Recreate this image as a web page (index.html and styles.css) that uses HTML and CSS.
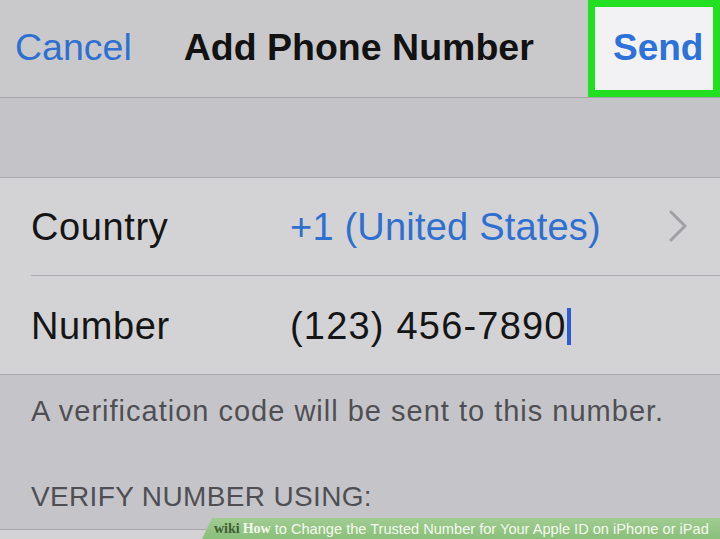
FILE: index.html
```html
<!DOCTYPE html>
<html lang="en">
<head>
<meta charset="utf-8">
<title>Add Phone Number</title>
<link rel="stylesheet" href="styles.css">
</head>
<body>
<div class="screen">
  <header class="nav">
    <span class="nav-cancel">Cancel</span>
    <span class="nav-title">Add Phone Number</span>
    <span class="nav-send">Send</span>
  </header>

  <div class="spacer"></div>

  <section class="group">
    <div class="row row-sep">
      <span class="row-label">Country</span>
      <span class="row-value blue">+1 (United States)</span>
      <svg class="chevron" width="20" height="32" viewBox="0 0 20 32" aria-hidden="true">
        <polyline points="3,2 17,16 3,30" fill="none" stroke="#a0a0a4" stroke-width="3" stroke-linecap="round" stroke-linejoin="round"/>
      </svg>
    </div>
    <div class="row">
      <span class="row-label">Number</span>
      <span class="row-value digits">(123) 456-7890<span class="caret"></span></span>
    </div>
  </section>

  <div class="footer">
    <p class="footer-note">A verification code will be sent to this number.</p>
    <p class="footer-head">VERIFY NUMBER USING:</p>
  </div>

  <div class="group next"></div>

  <div class="banner">
    <span class="banner-wiki">wiki</span><span class="banner-how">How</span><span class="banner-text"> to Change the Trusted Number for Your Apple ID on iPhone or iPad</span>
  </div>
</div>
</body>
</html>
```

FILE: styles.css
```css
* {
  box-sizing: border-box;
}

html, body {
  margin: 0;
  padding: 0;
}

body {
  width: 720px;
  height: 539px;
  overflow: hidden;
  background: #c5c5c9;
  font-family: "Liberation Sans", Arial, sans-serif;
}

.screen {
  position: relative;
  width: 720px;
  height: 539px;
  display: flex;
  flex-direction: column;
}

/* navigation bar */
.nav {
  height: 98px;
  flex: none;
  display: flex;
  align-items: stretch;
  background: #c9c9cc;
  border-bottom: 1px solid #a6a6aa;
}

.nav-cancel {
  display: flex;
  align-items: center;
  padding-left: 15px;
  padding-bottom: 2px;
  font-size: 37.5px;
  color: #2f6fcf;
}

.nav-title {
  display: flex;
  align-items: center;
  margin-left: 52px;
  padding-bottom: 2px;
  font-size: 37.5px;
  font-weight: bold;
  color: #121212;
}

.nav-send {
  margin-left: auto;
  width: 132px;
  height: 97px;
  display: flex;
  align-items: center;
  padding-left: 18px;
  padding-bottom: 2px;
  background: #f2f2f4;
  border: 7px solid #22df22;
  font-size: 37px;
  font-weight: bold;
  color: #2d72d8;
}

.spacer {
  height: 80px;
  flex: none;
  background: #c4c4c8;
  border-bottom: 1px solid #aaaaae;
}

/* table cells */
.group {
  flex: none;
  background: #d3d3d5;
  border-bottom: 1px solid #aaaaae;
}

.row {
  position: relative;
  height: 98px;
  display: grid;
  grid-template-columns: 259px 1fr auto;
  align-items: center;
  padding: 3px 32px 0 31px;
  font-size: 38px;
  color: #151515;
}

.row-sep {
  border-bottom: 1px solid #acacb0;
  margin-left: 31px;
  padding-left: 0;
  padding-top: 1px;
}

.row-label {
  letter-spacing: 0.6px;
}

.row-value {
  display: flex;
  align-items: center;
  letter-spacing: 0.2px;
}

.digits {
  letter-spacing: 1.2px;
}

.blue {
  color: #2f6fcf;
}

.chevron {
  display: block;
  margin-top: -2px;
}

.caret {
  display: inline-block;
  width: 4px;
  height: 37px;
  background: #2d5bd6;
}

/* group footer */
.footer {
  flex: none;
  height: 154px;
  padding: 19px 31px 0;
  color: #4f4f53;
}

.footer-note {
  margin: 0;
  font-size: 29px;
  line-height: 34px;
  letter-spacing: 1px;
}

.footer-head {
  margin: 52px 0 0;
  font-size: 28px;
  line-height: 34px;
  letter-spacing: 0.35px;
}

.next {
  flex: 1;
  border-top: 1px solid #a8a8ac;
  border-bottom: none;
}

/* watermark strip */
.banner {
  position: absolute;
  right: 0;
  bottom: 0;
  width: 518px;
  height: 21px;
  display: flex;
  align-items: center;
  padding-left: 12px;
  background: linear-gradient(#a0cc92, #8abf7a);
  clip-path: polygon(10px 0, 100% 0, 100% 100%, 0 100%);
  white-space: nowrap;
}

.banner-wiki {
  font-family: "Liberation Serif", serif;
  font-weight: bold;
  font-size: 14px;
  color: #3f5f33;
}

.banner-how {
  font-family: "Liberation Serif", serif;
  font-weight: bold;
  font-size: 14px;
  color: #f4f9ef;
  margin-left: 3px;
}

.banner-text {
  font-size: 14.6px;
  color: #f4f9ef;
  white-space: pre;
}
```
